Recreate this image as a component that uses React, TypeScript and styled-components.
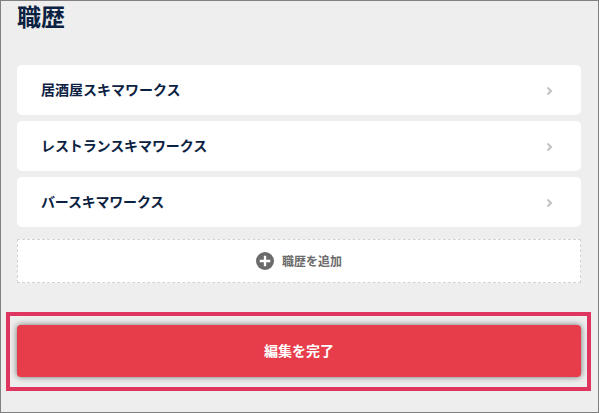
import React from "react";
import styled, { createGlobalStyle } from "styled-components";

const GlobalStyle = createGlobalStyle`
  * { box-sizing: border-box; }
  body { margin: 0; }
`;

const Page = styled.main`
  display: flex;
  flex-direction: column;
  width: 599px;
  height: 413px;
  padding: 0 5px;
  overflow: hidden;
  border: 1px solid #808080;
  background: #eeeeee;
  color: #0b2142;
  font-family: "Noto Sans CJK JP", sans-serif;
  font-weight: 700;
`;

const Section = styled.section`
  padding: 0 12px 0 11px;
`;

const Title = styled.h1`
  height: 32px;
  margin: 0 0 32px;
  font-size: 24px;
  line-height: 30px;
`;

const JobList = styled.ul`
  display: flex;
  flex-direction: column;
  gap: 6px;
  margin: 0 0 12px;
  padding: 0;
  list-style: none;
`;

const JobRow = styled.li<{ $tracking: number }>`
  display: flex;
  align-items: center;
  justify-content: space-between;
  height: 50px;
  padding: 0 28px 2px 24px;
  border-radius: 5px;
  background: #ffffff;
  font-size: 14px;
  line-height: 20px;
  letter-spacing: ${({ $tracking }) => $tracking}px;
`;

const Chevron = styled.svg`
  width: 7px;
  height: 10px;
  margin-top: 4px;
  fill: none;
  stroke: #c4c4c4;
  stroke-width: 2.2;
`;

const AddButton = styled.button`
  display: flex;
  align-items: center;
  justify-content: center;
  gap: 8px;
  width: 100%;
  height: 44px;
  padding: 0;
  border: 1px dashed #d3d3d3;
  background: #ffffff;
  color: #6b6b6b;
  font: 700 12px/18px "Noto Sans CJK JP", sans-serif;
`;

const PlusIcon = styled.svg`
  width: 18px;
  height: 18px;
`;

const Highlight = styled.div`
  width: 585px;
  height: 79px;
  margin-top: 29px;
  padding: 9px 6px 0 7px;
  border: 4px solid #df365f;
`;

const SubmitButton = styled.button`
  display: block;
  width: 100%;
  height: 52px;
  padding: 0 0 2px;
  border: 0;
  border-radius: 4px;
  background: #e73c49;
  box-shadow: 0 0 6px rgba(0, 0, 0, 0.55);
  color: #ffffff;
  font: 700 14px/20px "Noto Sans CJK JP", sans-serif;
`;

const jobs = [
  { name: "居酒屋スキマワークス", tracking: 0 },
  { name: "レストランスキマワークス", tracking: -0.1 },
  { name: "バースキマワークス", tracking: -0.2 },
];

export default function App() {
  return (
    <>
      <GlobalStyle />
      <Page>
        <Section>
          <Title>職歴</Title>
          <JobList>
            {jobs.map((job) => (
              <JobRow key={job.name} $tracking={job.tracking}>
                {job.name}
                <Chevron viewBox="0 0 7 10">
                  <path d="M1.5 1.5 5 5 1.5 8.5" />
                </Chevron>
              </JobRow>
            ))}
          </JobList>
          <AddButton type="button">
            <PlusIcon viewBox="0 0 18 18">
              <circle cx="9" cy="9" r="9" fill="#6b6b6b" />
              <path d="M9 3.7v10.6M3.7 9h10.6" stroke="#ffffff" strokeWidth="2.3" />
            </PlusIcon>
            職歴を追加
          </AddButton>
        </Section>
        <Highlight>
          <SubmitButton type="button">編集を完了</SubmitButton>
        </Highlight>
      </Page>
    </>
  );
}
